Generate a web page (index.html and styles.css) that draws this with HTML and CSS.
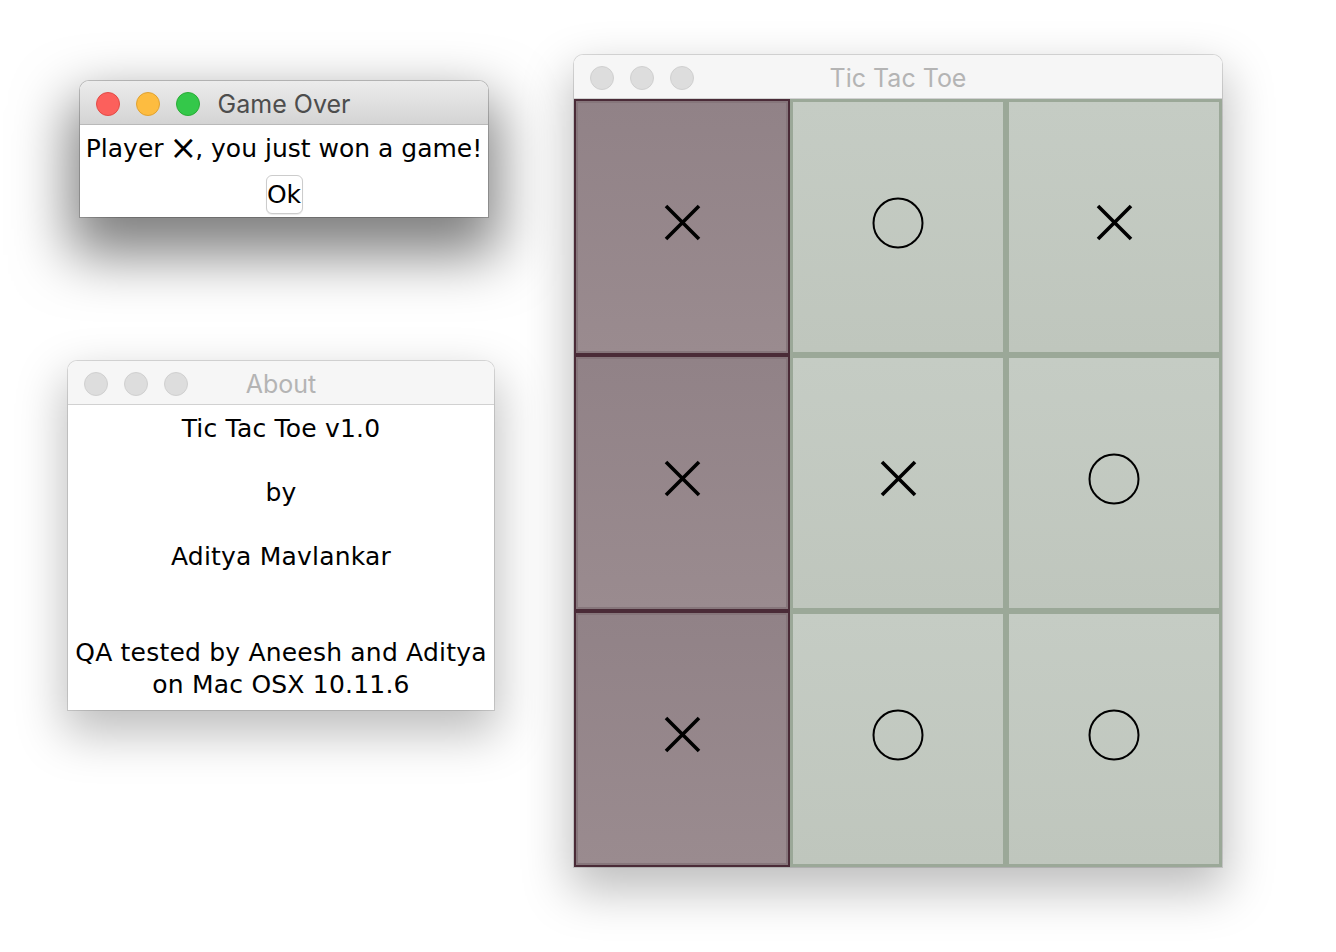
FILE: index.html
```html
<!DOCTYPE html>
<html lang="en">
<head>
<meta charset="utf-8">
<title>Tic Tac Toe</title>
<link rel="stylesheet" href="styles.css">
</head>
<body>
<div class="desktop">

  <div class="window active win-gameover">
    <div class="titlebar">
      <div class="lights">
        <span class="light red"></span><span class="light yellow"></span><span class="light green"></span>
      </div>
      <div class="title">Game Over</div>
      <div></div>
    </div>
    <div class="content dialog">
      <div class="msg">Player <span class="times">×</span>, you just won a game!</div>
      <button class="btn">Ok</button>
    </div>
  </div>

  <div class="window win-about">
    <div class="titlebar">
      <div class="lights">
        <span class="light"></span><span class="light"></span><span class="light"></span>
      </div>
      <div class="title">About</div>
      <div></div>
    </div>
    <div class="content about">Tic Tac Toe v1.0

by

Aditya Mavlankar


QA tested by Aneesh and Aditya
on Mac OSX 10.11.6</div>
  </div>

  <div class="window win-board">
    <div class="titlebar">
      <div class="lights">
        <span class="light"></span><span class="light"></span><span class="light"></span>
      </div>
      <div class="title">Tic Tac Toe</div>
      <div></div>
    </div>
    <div class="board">
      <div class="cell win"><svg class="mark-x" viewBox="0 0 37 37"><path d="M2 2 L35 35 M35 2 L2 35"/></svg></div>
      <div class="cell"><svg class="mark-o" viewBox="0 0 52 52"><circle cx="26" cy="26" r="24.5"/></svg></div>
      <div class="cell"><svg class="mark-x" viewBox="0 0 37 37"><path d="M2 2 L35 35 M35 2 L2 35"/></svg></div>
      <div class="cell win"><svg class="mark-x" viewBox="0 0 37 37"><path d="M2 2 L35 35 M35 2 L2 35"/></svg></div>
      <div class="cell"><svg class="mark-x" viewBox="0 0 37 37"><path d="M2 2 L35 35 M35 2 L2 35"/></svg></div>
      <div class="cell"><svg class="mark-o" viewBox="0 0 52 52"><circle cx="26" cy="26" r="24.5"/></svg></div>
      <div class="cell win"><svg class="mark-x" viewBox="0 0 37 37"><path d="M2 2 L35 35 M35 2 L2 35"/></svg></div>
      <div class="cell"><svg class="mark-o" viewBox="0 0 52 52"><circle cx="26" cy="26" r="24.5"/></svg></div>
      <div class="cell"><svg class="mark-o" viewBox="0 0 52 52"><circle cx="26" cy="26" r="24.5"/></svg></div>
    </div>
  </div>

</div>
</body>
</html>
```

FILE: styles.css
```css
* { box-sizing: border-box; }

html, body {
  margin: 0;
  padding: 0;
  background: #ffffff;
}

.desktop {
  position: relative;
  width: 1336px;
  height: 952px;
  overflow: hidden;
  background: #ffffff;
}

.window {
  position: absolute;
  background: #ffffff;
  border-radius: 9px 9px 0 0;
  box-shadow: 0 0 0 1px rgba(0, 0, 0, 0.13), 0 20px 48px 4px rgba(0, 0, 0, 0.26);
}

.window.active {
  box-shadow: 0 0 0 1px rgba(0, 0, 0, 0.2), 0 28px 56px 10px rgba(0, 0, 0, 0.5);
}

.win-gameover { left: 80px; top: 81px; width: 408px; }
.win-about    { left: 68px; top: 361px; width: 426px; }
.win-board    { left: 574px; top: 55px; width: 648px; }

.titlebar {
  height: 44px;
  display: grid;
  grid-template-columns: 1fr auto 1fr;
  align-items: center;
  padding-top: 2px;
  background: #f6f6f6;
  border-bottom: 1px solid #d1d1d1;
  border-radius: 9px 9px 0 0;
}

.active .titlebar {
  background: linear-gradient(#ececec, #d4d4d4);
  border-bottom: 1px solid #b9b9b9;
}

.lights {
  display: flex;
  gap: 16px;
  padding-left: 16px;
}

.light {
  width: 24px;
  height: 24px;
  border-radius: 50%;
  background: #dddddd;
  border: 1px solid #d0d0d0;
}

.light.red    { background: #fc605c; border-color: #e24b46; }
.light.yellow { background: #fdbc40; border-color: #e0a232; }
.light.green  { background: #34c84a; border-color: #2aac36; }

.title {
  font-family: "Inter", "Liberation Sans", sans-serif;
  font-size: 25px;
  color: #b4b4b4;
  white-space: nowrap;
}

.active .title { color: #4d4d4d; }

.content {
  font-family: "DejaVu Sans", sans-serif;
  font-size: 25px;
  line-height: 32px;
  color: #000000;
  text-align: center;
}

.times {
  font-size: 33px;
  line-height: 0;
  vertical-align: -2px;
  margin: 0 -2px;
}

.dialog {
  display: flex;
  flex-direction: column;
  align-items: center;
  padding: 8px 0 3px;
  gap: 10px;
}

.btn {
  width: 37px;
  height: 39px;
  padding: 0;
  font-family: "DejaVu Sans", sans-serif;
  font-size: 25px;
  color: #000000;
  background: #ffffff;
  border: 1px solid #cccccc;
  border-radius: 6px;
  box-shadow: 0 1px 1px rgba(0, 0, 0, 0.08);
}

.about {
  white-space: pre-line;
  padding: 8px 0 9px;
  letter-spacing: 0.2px;
}

.board {
  display: grid;
  grid-template-columns: repeat(3, 216px);
  grid-template-rows: repeat(3, 256px);
}

.cell {
  display: flex;
  align-items: center;
  justify-content: center;
  padding-bottom: 9px;
  border: 3px solid #9ba898;
  background: linear-gradient(#c5ccc4, #bfc6bd);
}

.cell.win {
  border: 2px solid #4a2b37;
  box-shadow: inset 0 0 0 2px #86767b;
  background: linear-gradient(#918287, #9a8b8f);
}

.mark-x {
  width: 37px;
  height: 37px;
}

.mark-x path {
  fill: none;
  stroke: #000000;
  stroke-width: 3.6;
}

.mark-o {
  width: 52px;
  height: 52px;
}

.mark-o circle {
  fill: none;
  stroke: #000000;
  stroke-width: 2;
}
```
